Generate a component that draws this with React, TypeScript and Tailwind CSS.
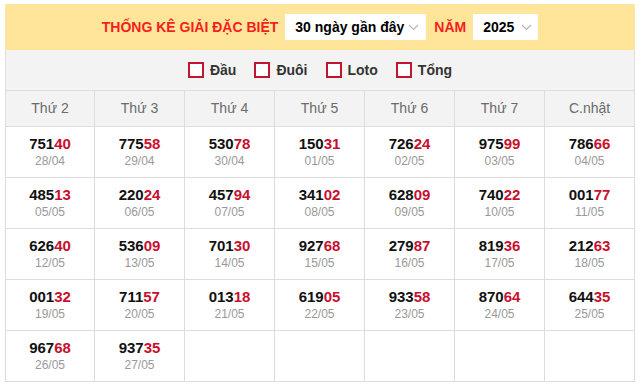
import React from 'react';

interface Result {
    num: string;
    date: string;
}

const days = ['Thứ 2', 'Thứ 3', 'Thứ 4', 'Thứ 5', 'Thứ 6', 'Thứ 7', 'C.nhật'];

const results: Result[] = [
    {num: '75140', date: '28/04'}, {num: '77558', date: '29/04'}, {num: '53078', date: '30/04'},
    {num: '15031', date: '01/05'}, {num: '72624', date: '02/05'}, {num: '97599', date: '03/05'},
    {num: '78666', date: '04/05'},
    {num: '48513', date: '05/05'}, {num: '22024', date: '06/05'}, {num: '45794', date: '07/05'},
    {num: '34102', date: '08/05'}, {num: '62809', date: '09/05'}, {num: '74022', date: '10/05'},
    {num: '00177', date: '11/05'},
    {num: '62640', date: '12/05'}, {num: '53609', date: '13/05'}, {num: '70130', date: '14/05'},
    {num: '92768', date: '15/05'}, {num: '27987', date: '16/05'}, {num: '81936', date: '17/05'},
    {num: '21263', date: '18/05'},
    {num: '00132', date: '19/05'}, {num: '71157', date: '20/05'}, {num: '01318', date: '21/05'},
    {num: '61905', date: '22/05'}, {num: '93358', date: '23/05'}, {num: '87064', date: '24/05'},
    {num: '64435', date: '25/05'},
    {num: '96768', date: '26/05'}, {num: '93735', date: '27/05'},
];

const Chevron = () => (
    <svg width="11" height="7" viewBox="0 0 11 7" fill="none" className="ml-auto">
        <path d="M1 1l4.5 4.5L10 1" stroke="#b5b5b5" strokeWidth="1.2"/>
    </svg>
);

const Check = ({label}: {label: string}) => (
    <label className="flex items-center gap-[6px] text-[14px] font-bold text-[#333]">
        <span className="w-[16px] h-[16px] border-2 border-[#c0172f] bg-white"/>
        {label}
    </label>
);

const App = () => {
    const cells: (Result | null)[] = [...results];
    while (cells.length % 7 !== 0) cells.push(null);

    return (
        <div className="bg-white min-h-[387px] pt-[4px] pl-[5px]" style={{fontFamily: '"Liberation Sans", Arial, sans-serif'}}>
            <div className="w-[630px]">
                {/* tiêu đề */}
                <div className="bg-[#ffe59a] h-[46px] flex items-center justify-center gap-[7px]">
                    <span className="text-[14px] font-bold text-[#f41e1e]">THỐNG KÊ GIẢI ĐẶC BIỆT</span>
                    <div className="bg-white w-[141px] h-[26px] flex items-center pl-[10px] pr-[7px] text-[14px] font-bold text-black">
                        30 ngày gần đây
                        <Chevron/>
                    </div>
                    <span className="text-[14px] font-bold text-[#f41e1e] ml-[1px]">NĂM</span>
                    <div className="bg-white w-[65px] h-[26px] flex items-center pl-[10px] pr-[6px] text-[14px] font-bold text-black">
                        2025
                        <Chevron/>
                    </div>
                </div>

                {/* bộ lọc */}
                <div className="bg-[#f3f3f3] h-[40px] border-x border-[#dddddd] flex items-center justify-center gap-[18px]">
                    <Check label="Đầu"/>
                    <Check label="Đuôi"/>
                    <Check label="Loto"/>
                    <Check label="Tổng"/>
                </div>

                {/* bảng */}
                <div className="grid grid-cols-[89px_repeat(6,90px)] border-l border-t border-[#dddddd]">
                    {days.map((d) => (
                        <div key={d} className="h-[36px] bg-[#f3f3f3] border-r border-b border-[#dddddd] flex items-center justify-center text-[14px] text-[#6b6b6b]">
                            {d}
                        </div>
                    ))}
                    {cells.map((c, i) => (
                        <div key={i} className="h-[51px] border-r border-b border-[#dddddd] flex flex-col items-center pt-[8px]">
                            {c && (
                                <>
                                    <div className="text-[15px] font-bold leading-[18px] text-[#111]">
                                        {c.num.slice(0, 3)}
                                        <span className="text-[#c8102e]">{c.num.slice(3)}</span>
                                    </div>
                                    <div className="text-[12px] leading-[16px] text-[#999]">{c.date}</div>
                                </>
                            )}
                        </div>
                    ))}
                </div>
            </div>
        </div>
    );
};

export default App;
